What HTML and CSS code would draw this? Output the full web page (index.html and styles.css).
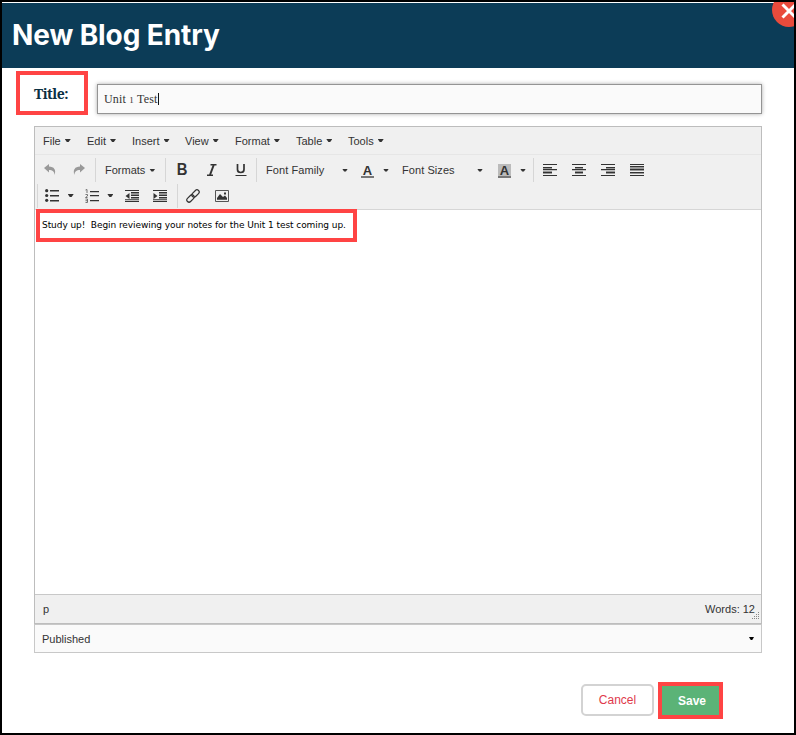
FILE: index.html
```html
<!DOCTYPE html>
<html lang="en">
<head>
<meta charset="utf-8">
<title>New Blog Entry</title>
<link rel="stylesheet" href="styles.css">
</head>
<body>
<main class="dialog">
  <header class="header">
    <h1>New Blog Entry</h1>
    <button class="close" aria-label="Close"><svg width="16" height="16" viewBox="0 0 16 16"><path d="M1.5 1.5l13 13M14.5 1.5l-13 13" stroke="#fff" stroke-width="3"/></svg></button>
  </header>
  <div class="title-row">
    <label class="title-label">Title:</label>
    <div class="title-input"><span>Unit <span class="oldstyle">1</span> Test</span><i class="cursor"></i></div>
  </div>
  <section class="editor">
    <nav class="menubar">
      <span class="m-file">File<i class="caret"></i></span>
      <span class="m-edit">Edit<i class="caret"></i></span>
      <span class="m-insert">Insert<i class="caret"></i></span>
      <span class="m-view">View<i class="caret"></i></span>
      <span class="m-format">Format<i class="caret"></i></span>
      <span class="m-table">Table<i class="caret"></i></span>
      <span class="m-tools">Tools<i class="caret"></i></span>
    </nav>
    <div class="toolbar">
      <div class="tools">
        <span class="icon faded"><svg width="14" height="14" viewBox="0 0 14 14"><path d="M1 5L6 1v2.500C11 3.500 13.500 7 11.500 12 11.500 8.500 9.500 7 6 7V9.500z" fill="currentColor"/></svg></span>
        <span class="icon faded"><svg width="14" height="14" viewBox="0 0 14 14"><path d="M13 5L8 1v2.500C3 3.500 .5 7 2.500 12 2.500 8.500 4.500 7 8 7V9.500z" fill="currentColor"/></svg></span>
        <i class="sep"></i>
        <span class="formats">Formats<i class="caret"></i></span>
        <i class="sep"></i>
        <span class="icon"><b class="bold">B</b></span>
        <span class="icon"><svg width="12" height="12" viewBox="0 0 12 12"><path d="M4.500 .7h6M1 11.300h6" fill="none" stroke="currentColor" stroke-width="1.400"/><path d="M7.700 1L4 11" stroke="currentColor" stroke-width="2"/></svg></span>
        <span class="icon"><svg width="12" height="14" viewBox="0 0 12 14"><path d="M2.500 1v5.500c0 4 6.500 4 6.500 0V1" fill="none" stroke="currentColor" stroke-width="1.700"/><path d="M.5 12.500h11" stroke="currentColor" stroke-width="1"/></svg></span>
        <i class="sep"></i>
        <span class="family">Font Family<i class="caret"></i></span>
        <span class="color"><b>A</b></span><i class="caret after-color"></i>
        <span class="sizes">Font Sizes<i class="caret"></i></span>
        <span class="color back"><b>A</b></span><i class="caret after-back"></i>
        <i class="sep"></i>
        <span class="icon"><svg width="14" height="12" viewBox="0 0 14 12"><path d="M0 3h9v2H0zM0 7h9v3H0z" fill="#999"/><path d="M0 0h14v1H0zM0 3h9v1H0zM0 5h14v1.300H0zM0 8h9v1H0zM0 11h14v1H0z" fill="currentColor"/></svg></span>
        <span class="icon"><svg width="14" height="12" viewBox="0 0 14 12"><path d="M3 3h8v2H3zM3 7h8v3H3z" fill="#999"/><path d="M0 0h14v1H0zM3 3h8v1H3zM0 5h14v1.300H0zM3 8h8v1H3zM0 11h14v1H0z" fill="currentColor"/></svg></span>
        <span class="icon"><svg width="14" height="12" viewBox="0 0 14 12"><path d="M5 3h9v2H5zM5 7h9v3H5z" fill="#999"/><path d="M0 0h14v1H0zM5 3h9v1H5zM0 5h14v1.300H0zM5 8h9v1H5zM0 11h14v1H0z" fill="currentColor"/></svg></span>
        <span class="icon"><svg width="14" height="12" viewBox="0 0 14 12"><path d="M0 3h14v2H0zM0 6h14v1H0zM0 9h14v1H0z" fill="#999"/><path d="M0 0h14v1H0zM0 2h14v1H0zM0 5h14v1H0zM0 8h14v1H0zM0 11h14v1H0z" fill="currentColor"/></svg></span>
      </div>
      <div class="tools second">
        <i class="sep"></i>
        <span class="icon"><svg width="14" height="13" viewBox="0 0 14 13"><circle cx="1.700" cy="1.700" r="1.600" fill="currentColor"/><circle cx="1.700" cy="6.500" r="1.600" fill="currentColor"/><circle cx="1.700" cy="11.300" r="1.600" fill="currentColor"/><path d="M5 1h9v1.500H5zM5 6h9v1.500H5zM5 11h9v1.500H5z" fill="currentColor"/></svg></span>
        <i class="caret"></i>
        <span class="icon"><svg width="14" height="14" viewBox="0 0 14 14"><path d="M5 2h9v1.300H5zM5 6h9v1.300H5zM5 11h9v1.300H5z" fill="currentColor"/><path d="M.5 1L2 .5V4M.5 5.500h2V7L.5 8.500h2M.5 10h2v3.500h-2M.5 11.700h2" fill="none" stroke="#666" stroke-width=".9"/></svg></span>
        <i class="caret"></i>
        <span class="icon"><svg width="14" height="12" viewBox="0 0 14 12"><path d="M0 0h14v1H0zM0 11h14v1H0zM6 2h8v1.600H6zM6 4.500h8v1.600H6zM6 7h8v1.600H6zM0 9.300h14v1H0zM4.500 3v6L.5 6z" fill="currentColor"/></svg></span>
        <span class="icon"><svg width="14" height="12" viewBox="0 0 14 12"><path d="M0 0h14v1H0zM0 11h14v1H0zM6 2h8v1.600H6zM6 4.500h8v1.600H6zM6 7h8v1.600H6zM0 9.300h14v1H0zM.5 3v6L4.500 6z" fill="currentColor"/></svg></span>
        <i class="sep"></i>
        <span class="icon"><svg width="14" height="14" viewBox="0 0 14 14"><g transform="rotate(-45 7 7)" fill="none" stroke="currentColor" stroke-width="1.200"><rect x="-.8" y="4.800" width="8.500" height="4.400" rx="2.200"/><rect x="6.300" y="4.800" width="8.500" height="4.400" rx="2.200"/></g></svg></span>
        <span class="icon"><svg width="14" height="12" viewBox="0 0 14 12"><path d="M.5.5h13v11H.5z" fill="#eee" stroke="#555"/><path d="M2 9.800V8l3-4 3 3 2-1.500 2 2.500v1.800zM9 2.500h2v2H9z" fill="currentColor"/></svg></span>
      </div>
    </div>
    <div class="content"><p>Study up!&nbsp; Begin reviewing your notes for the Unit 1 test coming up.</p></div>
    <footer class="status"><span>p</span><span>Words: 12</span>
      <svg class="grip" width="8" height="8" viewBox="0 0 8 8"><path d="M6 0h1v1H6zM4 2h1v1H4zM6 2h1v1H6zM2 4h1v1H2zM4 4h1v1H4zM6 4h1v1H6zM0 6h1v1H0zM2 6h1v1H2zM4 6h1v1H4zM6 6h1v1H6z" fill="#888"/></svg>
    </footer>
  </section>
  <div class="select"><span>Published</span><i class="caret"></i></div>
  <div class="actions">
    <button class="cancel">Cancel</button>
    <button class="save">Save</button>
  </div>
</main>
</body>
</html>
```
FILE: styles.css
```css
* { box-sizing: border-box; }
body { margin: 0; font: 11px/14px "Liberation Sans", Arial, sans-serif; color: #333; }
button { font: inherit; padding: 0; }
svg { display: block; }
.dialog { width: 796px; height: 735px; border: 2px solid #000; background: #fff; overflow: hidden; }
.header { position: relative; height: 66px; border-top: 1px solid #fff; background: #0c3c57; padding-left: 10px; }
h1 { margin: 0; font: 700 28px/65px Inter, sans-serif; letter-spacing: -.1px; color: #fff; }
.close { position: absolute; right: -12px; top: -10px; width: 34px; height: 34px; border: 0; border-radius: 50%; background: #e94b3c; display: grid; place-items: center; }
.close svg { margin-top: 2px; }
.title-row { display: flex; padding: 3px 0 0 14px; height: 58px; }
.title-label { width: 72px; height: 44px; border: 4px solid #ff4444; padding-left: 14px; font: 700 14px/37px "Noto Serif", "DejaVu Serif", serif; letter-spacing: -.5px; color: #0c3043; }
.title-input { display: flex; align-items: center; width: 665px; height: 30px; margin: 13px 0 0 9px; padding-left: 6px; border: 1px solid #949494; background: #fafafa; box-shadow: 0 0 4px #aaa; font: 12px/14px "Liberation Serif", serif; letter-spacing: .2px; }
.oldstyle { font-size: 9px; }
.cursor { width: 1px; height: 12px; background: #111; }
.editor { width: 728px; height: 498px; margin: 0 0 0 32px; border: 1px solid #bdbdbd; background: #fff; display: flex; flex-direction: column; }
.menubar { display: flex; align-items: center; height: 28px; padding-left: 8px; background: #f0f0f0; border-bottom: 1px solid #e6e6e6; }
.menubar span { display: flex; align-items: center; }
.caret { flex: none; width: 6px; height: 3px; background: currentColor; clip-path: polygon(0 0, 100% 0, 65% 100%, 35% 100%); margin-left: 4px; }
.m-file { width: 44px; }
.m-edit { width: 45px; }
.m-insert { width: 53px; }
.m-view { width: 50px; }
.m-format { width: 61px; }
.m-table { width: 52px; }
.toolbar { height: 55px; padding-top: 2px; background: #f0f0f0; border-bottom: 1px solid #d6d6d6; }
.tools { display: flex; align-items: center; height: 26px; }
.tools > span { flex: none; }
.icon { width: 29px; display: grid; place-items: center; }
.faded { color: #999; }
.sep { flex: none; width: 1px; height: 24px; background: #d6d6d6; margin: 0 1px; }
.faded + .sep { margin-left: 2px; }
.formats { display: flex; align-items: center; width: 67px; padding-left: 8px; }
.formats + .sep { margin-right: 2px; }
.bold { font: 700 17px/18px "Liberation Sans", sans-serif; transform: scaleX(.87); }
.family { display: flex; align-items: center; width: 103px; padding-left: 8px; letter-spacing: .07px; }
.family .caret { margin: 0 13px 0 auto; }
.color { width: 13px; height: 14px; border-bottom: 2px solid #777; font-size: 13px; line-height: 13px; text-align: center; margin-top: 2px; }
.back { background: #bbb; }
.after-color { margin: 0 13px 0 9px; }
.sizes { display: flex; align-items: center; width: 96px; letter-spacing: .07px; }
.sizes .caret { margin: 0 15px 0 auto; }
.after-back { margin: 0 6px 0 9px; }
.second { height: 25px; padding-left: 1px; }
.second > .caret { margin: 0 4px 0 1px; }
.second .icon { width: 28.700px; }
.second > .sep:first-child { margin-right: 0; }
.second .icon + .sep { margin-left: 2px; }
.content { flex: 1; }
.content p { width: 321px; height: 33px; margin: -1px 0 0 1px; border: 4px solid #ff4444; padding-left: 2px; font: 9px/24px "DejaVu Sans", Verdana, sans-serif; letter-spacing: -.07px; white-space: nowrap; color: #000; }
.status { position: relative; display: flex; align-items: center; justify-content: space-between; height: 29px; padding: 0 6px 0 8px; border-top: 1px solid #c8c8c8; background: #f0f0f0; }
.grip { position: absolute; right: 1px; bottom: 3px; }
.select { display: flex; align-items: center; justify-content: space-between; width: 728px; height: 29px; margin-left: 32px; padding: 0 7px; border: 1px solid #c8c8c8; background: #fafafa; }
.select .caret { color: #000; width: 5px; }
.actions { display: flex; justify-content: flex-end; padding: 29px 71px 0 0; gap: 4px; }
.cancel { width: 73px; height: 32px; margin-top: 2px; border: 2px solid #d3d3d3; border-radius: 5px; background: #fff; color: #e0394b; font-size: 12px; }
.save { width: 65px; height: 37px; border: 4px solid #ff4444; background: #5bb377; color: #fff; font-size: 12px; font-weight: 700; padding-left: 3px; }
```
